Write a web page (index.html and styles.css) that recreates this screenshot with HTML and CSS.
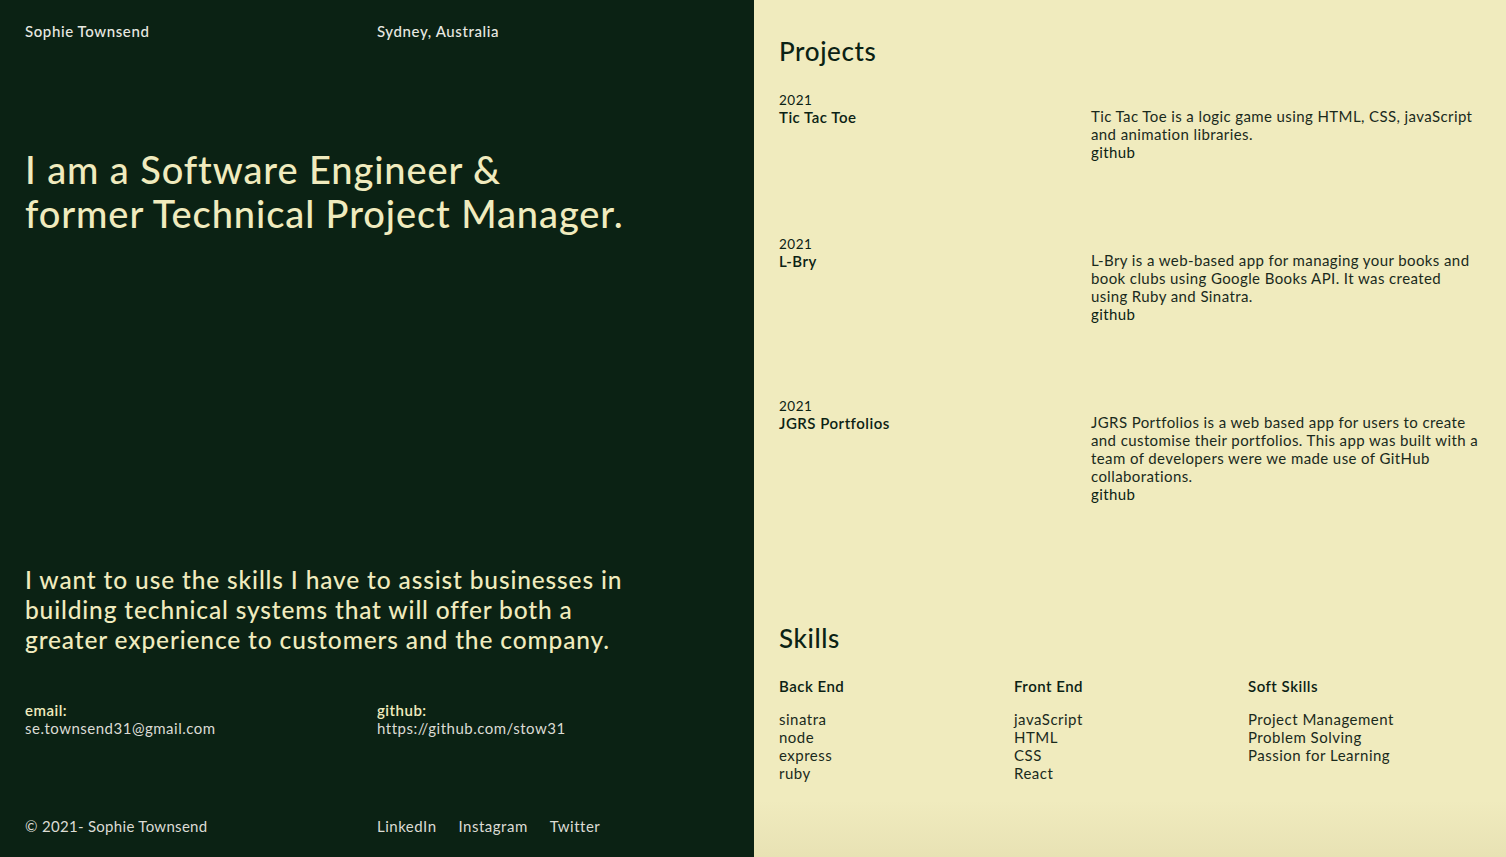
FILE: index.html
```html
<!DOCTYPE html>
<html lang="en">
<head>
<meta charset="utf-8">
<title>Sophie Townsend</title>
<link rel="stylesheet" href="styles.css">
</head>
<body>
<div class="page">
  <section class="intro">
    <header class="row top">
      <div class="name">Sophie Townsend</div>
      <div class="name">Sydney, Australia</div>
    </header>
    <h1 class="headline">I am a Software Engineer &amp;<br>former Technical Project Manager.</h1>
    <p class="mission">I want to use the skills I have to assist businesses in building technical systems that will offer both a greater experience to customers and the company.</p>
    <div class="row contacts">
      <div class="contact">
        <div class="label">email:</div>
        <div class="value">se.townsend31@gmail.com</div>
      </div>
      <div class="contact">
        <div class="label">github:</div>
        <div class="value">https://github.com/stow31</div>
      </div>
    </div>
    <footer class="row foot">
      <div class="copy">© 2021- Sophie Townsend</div>
      <nav class="links">
        <a href="#">LinkedIn</a>
        <a href="#">Instagram</a>
        <a href="#">Twitter</a>
      </nav>
    </footer>
  </section>
  <section class="work">
    <h2 class="section-title">Projects</h2>
    <div class="projects">
      <article class="project">
        <div class="meta">
          <div class="year">2021</div>
          <div class="ptitle">Tic Tac Toe</div>
        </div>
        <div class="desc">
          <p>Tic Tac Toe is a logic game using HTML, CSS, javaScript and animation libraries.</p>
          <a href="#">github</a>
        </div>
      </article>
      <article class="project">
        <div class="meta">
          <div class="year">2021</div>
          <div class="ptitle">L-Bry</div>
        </div>
        <div class="desc">
          <p>L-Bry is a web-based app for managing your books and book clubs using Google Books API. It was created using Ruby and Sinatra.</p>
          <a href="#">github</a>
        </div>
      </article>
      <article class="project">
        <div class="meta">
          <div class="year">2021</div>
          <div class="ptitle">JGRS Portfolios</div>
        </div>
        <div class="desc">
          <p>JGRS Portfolios is a web based app for users to create and customise their portfolios. This app was built with a team of developers were we made use of GitHub collaborations.</p>
          <a href="#">github</a>
        </div>
      </article>
    </div>
    <h2 class="section-title skills-title">Skills</h2>
    <div class="skills">
      <div class="skill-col">
        <h3>Back End</h3>
        <ul><li>sinatra</li><li>node</li><li>express</li><li>ruby</li></ul>
      </div>
      <div class="skill-col">
        <h3>Front End</h3>
        <ul><li>javaScript</li><li>HTML</li><li>CSS</li><li>React</li></ul>
      </div>
      <div class="skill-col">
        <h3>Soft Skills</h3>
        <ul><li>Project Management</li><li>Problem Solving</li><li>Passion for Learning</li></ul>
      </div>
    </div>
  </section>
</div>
</body>
</html>
```
FILE: styles.css
```css
* { box-sizing: border-box; }
html, body { margin: 0; padding: 0; height: 100%; }
body {
  font-family: Lato, "Open Sans", sans-serif;
  background: #f0ebbe;
  color: #0b2214;
  letter-spacing: 0.5px;
}
.page {
  display: grid;
  grid-template-columns: 754px 1fr;
  height: 857px;
}
.intro {
  background: #0b2214;
  color: #f0ebbe;
  padding: 22px 25px 22px 25px;
  display: flex;
  flex-direction: column;
}
.row {
  display: grid;
  grid-template-columns: 352px 1fr;
}
.name {
  font-size: 15px;
  line-height: 18px;
  font-weight: 500;
  color: #e9e9e2;
  letter-spacing: 0.6px;
}
.headline {
  margin: 107px 0 0 0;
  font-size: 38px;
  line-height: 44px;
  font-weight: 500;
  letter-spacing: 0.9px;
  color: #f0ebbe;
}
.mission {
  margin: auto 0 0 0;
  font-size: 24.5px;
  line-height: 30px;
  font-weight: 500;
  letter-spacing: 0.85px;
  color: #f0ebbe;
  width: 612px;
}
.contacts {
  margin-top: 46px;
  font-size: 15px;
  line-height: 18px;
}
.label { color: #f0ebbe; font-weight: 600; }
.value { color: #dcdcd4; }
.foot {
  margin-top: 80px;
  font-size: 15px;
  line-height: 18px;
  color: #dcdcd4;
}
.copy { letter-spacing: 0.3px; }
.links { display: flex; gap: 22px; }
.links a { color: #dcdcd4; text-decoration: none; }

.work {
  padding: 35px 25px 0 25px;
  background: linear-gradient(to bottom, #f0ebbe 0, #f0ebbe 800px, #e8e2b4 857px);
}
.section-title {
  margin: 0;
  font-size: 26px;
  line-height: 32px;
  font-weight: 500;
  letter-spacing: 0.6px;
  color: #0b2214;
}
.projects { margin-top: 25px; }
.project {
  display: grid;
  grid-template-columns: 312px 1fr;
  margin-bottom: 75px;
}
.project:last-child { margin-bottom: 0; }
.year { font-size: 13.5px; line-height: 16px; }
.ptitle { font-size: 15px; line-height: 18px; font-weight: 600; }
.desc {
  padding-top: 15px;
  font-size: 15px;
  line-height: 18px;
  letter-spacing: 0.4px;
  color: #1a2a1c;
}
.desc p { margin: 0; }
.desc a { color: #0b2214; text-decoration: none; }
.skills-title { margin-top: 119px; }
.skills {
  margin-top: 23px;
  display: grid;
  grid-template-columns: 235px 234px 1fr;
}
.skill-col h3 {
  margin: 0;
  font-size: 15px;
  line-height: 18px;
  font-weight: 600;
}
.skill-col ul {
  list-style: none;
  margin: 15px 0 0 0;
  padding: 0;
  font-size: 15px;
  line-height: 18px;
  color: #1a2a1c;
}
```
